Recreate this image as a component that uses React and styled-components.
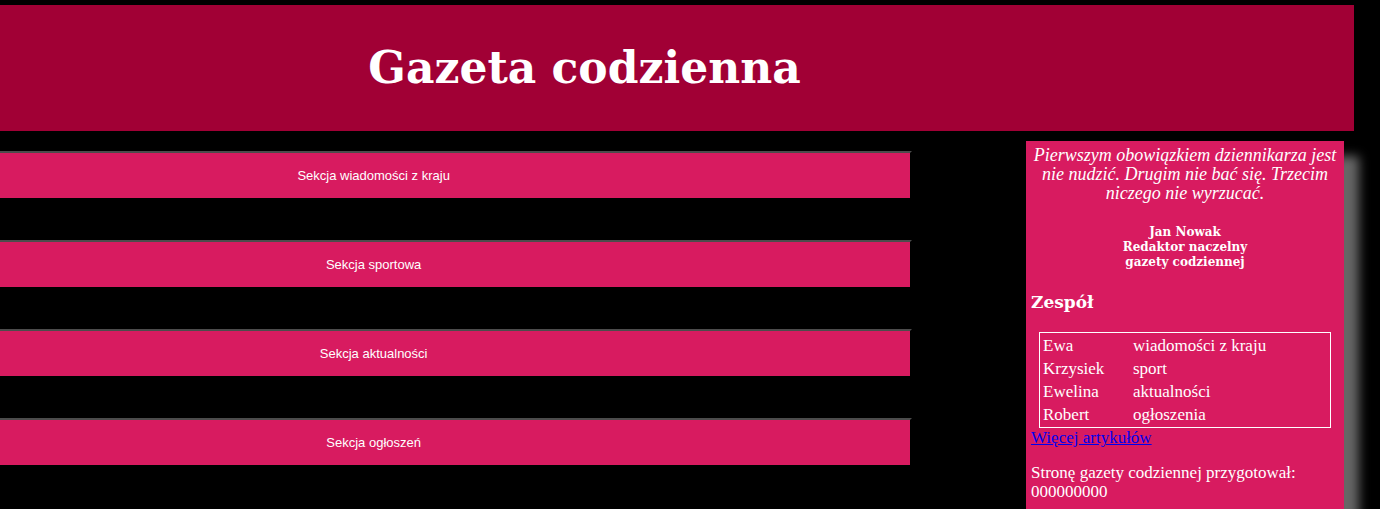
import React from "react";
import styled, { createGlobalStyle } from "styled-components";

const serif = '"Liberation Serif", "Times New Roman", serif';
const headingSerif = '"DejaVu Serif", serif';
const sans = '"Liberation Sans", Arial, sans-serif';

const GlobalStyle = createGlobalStyle`
  body {
    margin: 0;
    background: #000;
    color: #fff;
    font: 17px/19px ${serif};
    overflow: hidden;
  }
`;

const Page = styled.div`
  box-sizing: border-box;
  min-height: 100vh;
  margin: 0 26px 0 -185px;
  padding-top: 5px;
  display: flex;
  flex-direction: column;
`;

const Header = styled.header`
  background: #a10035;
  padding: 35px 0;
  text-align: center;
`;

const Title = styled.h1`
  margin: 0;
  font-family: ${headingSerif};
  font-size: 44px;
  line-height: 56px;
`;

const Content = styled.div`
  flex: 1;
  display: flex;
  justify-content: space-between;
  padding-top: 10px;
`;

const Sections = styled.main`
  width: 70%;
  margin-left: 20px;
  display: flex;
  flex-direction: column;
  gap: 40px;
  padding-top: 10px;
`;

const SectionButton = styled.button`
  width: 100%;
  height: 49px;
  padding: 0;
  border: 2px solid;
  border-color: #4c4c4c #000 #000 #4c4c4c;
  border-radius: 0;
  background: #d81b60;
  color: #fff;
  font: 13px/15px ${sans};
`;

const Sidebar = styled.aside`
  box-sizing: border-box;
  width: 318px;
  margin-right: 10px;
  padding: 5px;
  background: #d81b60;
  box-shadow: 15px 15px 10px #666;
`;

const Quote = styled.p`
  margin: 0;
  font-size: 18px;
  font-style: italic;
  text-align: center;
`;

const Signature = styled.h5`
  margin: 22px 0;
  font-family: ${headingSerif};
  font-size: 12px;
  line-height: 15px;
  text-align: center;
`;

const TeamHeading = styled.h3`
  margin: 0 0 19px;
  font-family: ${headingSerif};
  font-size: 17px;
  line-height: 21px;
`;

const TeamTable = styled.table`
  width: 292px;
  margin-left: 8px;
  border: 1px solid #fff;
  border-spacing: 2px;
  line-height: 19px;
`;

const Cell = styled.td`
  padding: 1px;
  width: ${(p) => p.$width || "auto"};
`;

const MoreLink = styled.a`
  color: #0000ee;
  text-decoration: underline;
`;

const Credit = styled.p`
  margin: 16px 0;
`;

const sections = [
  "Sekcja wiadomości z kraju",
  "Sekcja sportowa",
  "Sekcja aktualności",
  "Sekcja ogłoszeń",
];

const team = [
  ["Ewa", "wiadomości z kraju"],
  ["Krzysiek", "sport"],
  ["Ewelina", "aktualności"],
  ["Robert", "ogłoszenia"],
];

export default function App() {
  return (
    <>
      <GlobalStyle />
      <Page>
        <Header>
          <Title>Gazeta codzienna</Title>
        </Header>
        <Content>
          <Sections>
            {sections.map((name) => (
              <SectionButton key={name} type="button">{name}</SectionButton>
            ))}
          </Sections>
          <Sidebar>
            <Quote>
              Pierwszym obowiązkiem dziennikarza jest nie nudzić. Drugim nie
              bać się. Trzecim niczego nie wyrzucać.
            </Quote>
            <Signature>
              Jan Nowak
              <br />
              Redaktor naczelny
              <br />
              gazety codziennej
            </Signature>
            <TeamHeading>Zespół</TeamHeading>
            <TeamTable>
              <tbody>
                {team.map(([person, topic]) => (
                  <tr key={person}>
                    <Cell $width="86px">{person}</Cell>
                    <Cell>{topic}</Cell>
                  </tr>
                ))}
              </tbody>
            </TeamTable>
            <MoreLink href="#">Więcej artykułów</MoreLink>
            <Credit>
              Stronę gazety codziennej przygotował:
              <br />
              000000000
            </Credit>
          </Sidebar>
        </Content>
      </Page>
    </>
  );
}
